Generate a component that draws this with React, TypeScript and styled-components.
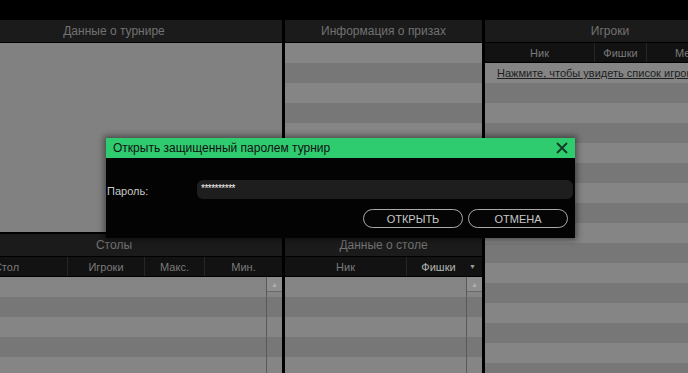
import React from "react";
import styled, { createGlobalStyle } from "styled-components";

const Global = createGlobalStyle`
  html, body { margin: 0; padding: 0; background: #000; }
  body { font-family: "Liberation Sans", Arial, sans-serif; overflow: hidden; }
  * { box-sizing: border-box; }
`;

const Page = styled.div`
  position: relative;
  width: 688px;
  height: 373px;
  background: #000;
  display: flex;
  flex-direction: column;
  overflow: hidden;
`;

const TopBar = styled.div`
  height: 20px;
  flex: none;
  background: #000;
`;

/* The lobby is wider than the window: it is scrolled 54px to the left
   and its right column runs past the right edge. */
const Main = styled.div`
  flex: 1;
  display: flex;
  gap: 3px;
  min-height: 0;
  margin-left: -54px;
  width: 789px;
`;

const Column = styled.div<{ $w: number }>`
  display: flex;
  flex-direction: column;
  gap: 2px;
  width: ${(p) => p.$w}px;
  flex: none;
  min-width: 0;
`;

const Panel = styled.div<{ $h?: number }>`
  display: flex;
  flex-direction: column;
  height: ${(p) => (p.$h ? `${p.$h}px` : "auto")};
  flex: ${(p) => (p.$h ? "none" : "1")};
  min-height: 0;
  overflow: hidden;
`;

const PanelHeader = styled.div`
  height: 23px;
  flex: none;
  background: #1b1b1b;
  border-bottom: 1px solid #000;
  color: #727272;
  font-size: 12px;
  display: flex;
  align-items: center;
  justify-content: center;
  white-space: nowrap;
`;

const ColHeaderRow = styled.div`
  height: 20px;
  flex: none;
  display: flex;
  background: #121212;
  border-bottom: 1px solid #000;
`;

const ColHead = styled.div<{ $w?: number; $bright?: boolean }>`
  width: ${(p) => (p.$w ? `${p.$w}px` : "auto")};
  flex: ${(p) => (p.$w ? "none" : "1")};
  display: flex;
  align-items: center;
  justify-content: center;
  font-size: 11px;
  color: ${(p) => (p.$bright ? "#b5b5b5" : "#7a7a7a")};
  border-right: 1px solid #262626;
  white-space: nowrap;
  overflow: hidden;
  position: relative;
  &:last-child { border-right: none; }
`;

const SortArrow = styled.span`
  position: absolute;
  right: 6px;
  top: 6px;
  font-size: 7px;
  color: #9a9a9a;
`;

const Solid = styled.div`
  flex: 1;
  background: #818181;
`;

const Striped = styled.div`
  flex: 1;
  display: flex;
  min-height: 0;
  background: repeating-linear-gradient(
    to bottom,
    #858585 0px,
    #858585 20px,
    #777777 20px,
    #777777 40px
  );
`;

const ListArea = styled.div`
  flex: 1;
  min-width: 0;
`;

const Scrollbar = styled.div`
  width: 16px;
  flex: none;
  border-left: 1px solid #5a5a5a;
  display: flex;
  flex-direction: column;
`;

const ScrollUp = styled.div`
  height: 15px;
  border-bottom: 1px solid #6a6a6a;
  background: #8e8e8e;
  display: flex;
  align-items: center;
  justify-content: center;
  font-size: 7px;
  color: #b0b0b0;
`;

const PlayersLink = styled.a`
  display: block;
  padding: 4px 0 0 12px;
  font-size: 11px;
  color: #1e1e1e;
  text-decoration: underline;
  white-space: nowrap;
  cursor: pointer;
`;

const Dialog = styled.div`
  position: absolute;
  left: 106px;
  top: 138px;
  width: 469px;
  height: 100px;
  background: #030303;
  box-shadow: 0 0 6px 2px rgba(0, 0, 0, 0.45);
  display: flex;
  flex-direction: column;
`;

const TitleBar = styled.div`
  height: 20px;
  background: #2fcb6f;
  display: flex;
  align-items: center;
  justify-content: space-between;
  padding: 0 7px 0 7px;
  color: #111;
  font-size: 12px;
`;

const CloseBtn = styled.button`
  width: 12px;
  height: 12px;
  border: none;
  background: none;
  padding: 0;
  display: flex;
  cursor: pointer;
`;

const DialogBody = styled.div`
  flex: 1;
  display: flex;
  flex-direction: column;
  padding: 22px 2px 0 1px;
  gap: 10px;
`;

const FieldRow = styled.div`
  display: flex;
  align-items: center;
`;

const Label = styled.label`
  width: 90px;
  flex: none;
  color: #c8c8c8;
  font-size: 11px;
  padding-top: 2px;
`;

const Input = styled.div`
  flex: 1;
  height: 19px;
  background: #1e1e1e;
  border-radius: 6px;
  color: #f0f0f0;
  font-size: 10px;
  display: flex;
  align-items: center;
  padding: 0 0 2px 4px;
  letter-spacing: -0.5px;
`;

const Buttons = styled.div`
  display: flex;
  justify-content: flex-end;
  gap: 5px;
  padding-right: 5px;
`;

const PillButton = styled.button`
  width: 100px;
  height: 19px;
  border: 1px solid #a9a9a9;
  border-radius: 10px;
  background: #050505;
  color: #c8c8c8;
  font-family: "Liberation Sans", Arial, sans-serif;
  font-size: 11px;
  padding: 0;
  cursor: pointer;
`;

export default function App() {
  return (
    <>
      <Global />
      <Page>
        <TopBar />
        <Main>
          <Column $w={336}>
            <Panel $h={212}>
              <PanelHeader>Данные о турнире</PanelHeader>
              <Solid />
            </Panel>
            <Panel>
              <PanelHeader>Столы</PanelHeader>
              <ColHeaderRow>
                <ColHead $w={122}>Стол</ColHead>
                <ColHead $w={77}>Игроки</ColHead>
                <ColHead $w={60}>Макс.</ColHead>
                <ColHead>Мин.</ColHead>
              </ColHeaderRow>
              <Striped>
                <ListArea />
                <Scrollbar>
                  <ScrollUp>▲</ScrollUp>
                </Scrollbar>
              </Striped>
            </Panel>
          </Column>
          <Column $w={197}>
            <Panel $h={212}>
              <PanelHeader>Информация о призах</PanelHeader>
              <Striped />
            </Panel>
            <Panel>
              <PanelHeader>Данные о столе</PanelHeader>
              <ColHeaderRow>
                <ColHead $w={122}>Ник</ColHead>
                <ColHead $bright>
                  <span style={{ marginRight: 12 }}>Фишки</span>
                  <SortArrow>▼</SortArrow>
                </ColHead>
              </ColHeaderRow>
              <Striped>
                <ListArea />
                <Scrollbar>
                  <ScrollUp>▲</ScrollUp>
                </Scrollbar>
              </Striped>
            </Panel>
          </Column>
          <Column $w={250}>
            <Panel>
              <PanelHeader>Игроки</PanelHeader>
              <ColHeaderRow>
                <ColHead $w={110}>Ник</ColHead>
                <ColHead $w={52}>Фишки</ColHead>
                <ColHead>Место</ColHead>
              </ColHeaderRow>
              <Striped>
                <ListArea>
                  <PlayersLink>Нажмите, чтобы увидеть список игроков</PlayersLink>
                </ListArea>
              </Striped>
            </Panel>
          </Column>
        </Main>
        <Dialog>
          <TitleBar>
            <span>Открыть защищенный паролем турнир</span>
            <CloseBtn aria-label="Закрыть">
              <svg width="12" height="12" viewBox="0 0 12 12">
                <path d="M1 1 L11 11 M11 1 L1 11" stroke="#123a22" strokeWidth="1.8" />
              </svg>
            </CloseBtn>
          </TitleBar>
          <DialogBody>
            <FieldRow>
              <Label>Пароль:</Label>
              <Input>**********</Input>
            </FieldRow>
            <Buttons>
              <PillButton>ОТКРЫТЬ</PillButton>
              <PillButton>ОТМЕНА</PillButton>
            </Buttons>
          </DialogBody>
        </Dialog>
      </Page>
    </>
  );
}
